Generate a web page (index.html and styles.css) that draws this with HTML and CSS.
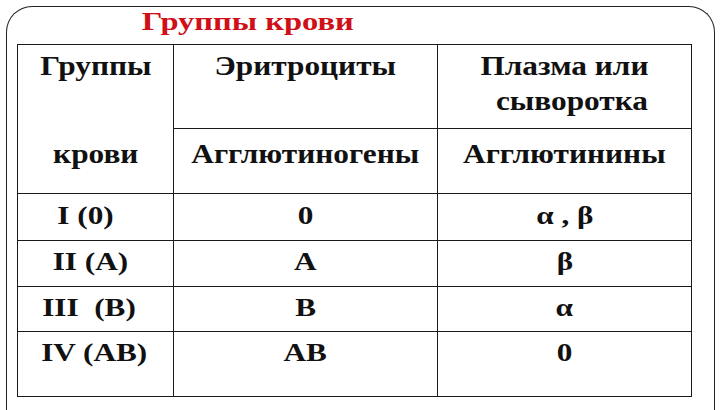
FILE: index.html
```html
<!DOCTYPE html>
<html lang="ru">
<head>
<meta charset="utf-8">
<title>Группы крови</title>
<link rel="stylesheet" href="styles.css">
</head>
<body>
<div class="frame">
  <h1 class="title"><span class="s">Группы крови</span></h1>
  <table class="blood">
    <colgroup>
      <col class="c1"><col class="c2"><col class="c3">
    </colgroup>
    <tr class="h1row">
      <td class="first-top"><span class="s">Группы</span></td>
      <td><span class="s">Эритроциты</span></td>
      <td><span class="s">Плазма или<br><span class="indent">сыворотка</span></span></td>
    </tr>
    <tr class="h2row">
      <td class="first-bottom"><span class="s">крови</span></td>
      <td><span class="s">Агглютиногены</span></td>
      <td><span class="s">Агглютинины</span></td>
    </tr>
    <tr class="drow r1">
      <td class="num"><span class="s">I (0)</span></td>
      <td><span class="s">0</span></td>
      <td><span class="s">α , β</span></td>
    </tr>
    <tr class="drow r2">
      <td class="num"><span class="s">II (A)</span></td>
      <td><span class="s">A</span></td>
      <td><span class="s">β</span></td>
    </tr>
    <tr class="drow r3">
      <td class="num"><span class="s">III&nbsp; (B)</span></td>
      <td><span class="s">B</span></td>
      <td><span class="s">α</span></td>
    </tr>
    <tr class="drow r4">
      <td class="num"><span class="s">IV (AB)</span></td>
      <td><span class="s">AB</span></td>
      <td><span class="s">0</span></td>
    </tr>
  </table>
</div>
</body>
</html>
```

FILE: styles.css
```css
html, body {
  margin: 0;
  padding: 0;
  background: #ffffff;
  overflow: hidden;
}

body {
  font-family: "Liberation Serif", "Times New Roman", serif;
  color: #111111;
}

.frame {
  box-sizing: border-box;
  margin: 6px 5px 0 6px;
  width: 709px;
  height: 404px;
  border: 1.5px solid #222222;
  border-bottom: none;
  border-radius: 26px 26px 0 0;
}

.s {
  display: inline-block;
  transform: scaleX(1.16);
  transform-origin: center;
}

.title {
  margin: 0;
  padding: 0;
  width: 482px;
  text-align: center;
  font-family: "Liberation Serif", "Times New Roman", serif;
  font-size: 26px;
  line-height: 30px;
  font-weight: bold;
  color: #d01018;
  height: 37px;
}

.title .s {
  transform: scaleX(1.25);
}

.blood {
  margin-left: 10px;
  border-collapse: collapse;
  table-layout: fixed;
  width: 674px;
}

.c1 { width: 156px; }
.c2 { width: 264px; }
.c3 { width: 254px; }

.blood td {
  border: 1px solid #1a1a1a;
  text-align: center;
  vertical-align: top;
  padding: 7px 0 0 0;
  box-sizing: border-box;
  font-family: "Liberation Serif", "Times New Roman", serif;
  font-size: 27px;
  font-weight: bold;
  line-height: 35px;
  color: #111111;
}

.drow td {
  font-size: 26px;
  line-height: 34px;
}

.drow td .s {
  transform: scaleX(1.2);
}

.h1row td { height: 84px; padding-top: 4px; }
.h2row td { height: 65px; padding-top: 8px; }
.r1 td { height: 47px; padding-top: 5px; }
.r2 td { height: 46px; padding-top: 4px; }
.r3 td { height: 45px; padding-top: 4px; }
.r4 td { height: 65px; padding-top: 4px; }

.r1 td.num { padding-right: 20px; }
.r2 td.num { padding-right: 10px; }
.r3 td.num { padding-right: 12px; }
.r4 td.num { padding-right: 2px; }

.first-top { border-bottom-style: hidden !important; }
.first-bottom { border-top-style: hidden !important; }

.indent {
  display: inline-block;
  padding-left: 13px;
}
```
